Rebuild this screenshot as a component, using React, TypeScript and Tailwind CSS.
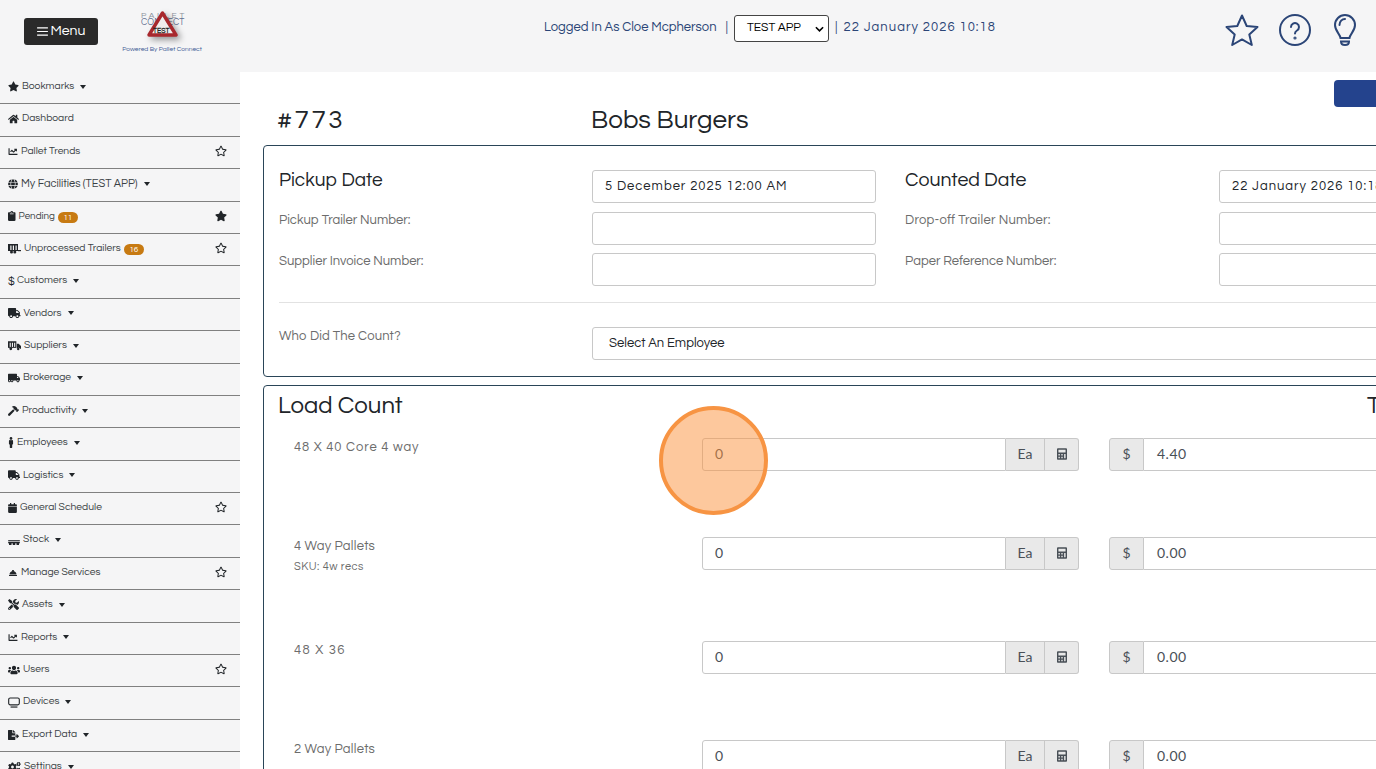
import { ReactNode } from "react";
import {
  FaStar,
  FaRegStar,
  FaHome,
  FaChartLine,
  FaGlobe,
  FaClipboard,
  FaTruck,
  FaTruckMoving,
  FaHammer,
  FaMale,
  FaCalendar,
  FaConciergeBell,
  FaTools,
  FaUsers,
  FaFileExport,
  FaCogs,
  FaCalculator,
} from "react-icons/fa";

const sans = "font-['Questrial','Lato','Liberation_Sans',sans-serif]";

type NavItem = {
  label: string;
  icon: ReactNode;
  caret?: boolean;
  star?: "empty" | "full";
  badge?: string;
  labelClass?: string;
};

// hand drawn ones, the icon packs have nothing close enough
const TrailerIcon = () => (
  <svg viewBox="0 0 13 10" className="w-[13px] h-[10px] shrink-0" fill="currentColor">
    <path d="M0 0h10v6H8.700V1.500H7.500V6H6V1.500H4.800V6H3.500V1.500H2.300V6H0z" />
    <circle cx="3.500" cy="8" r="1.500" />
    <circle cx="6.800" cy="8" r="1.500" />
    <rect x="0" y="6" width="10" height="1" />
    <rect x="10" y="6" width="3" height="1.200" />
  </svg>
);

const SupplierIcon = () => (
  <svg viewBox="0 0 14 10" className="w-[13px] h-[10px] shrink-0" fill="currentColor">
    <path d="M0 0h9v6H7.800V1.500H6.600V6H5.400V1.500H4.200V6H3V1.500H1.800V6H0z" />
    <rect x="0" y="6" width="9" height="1" />
    <circle cx="3" cy="8" r="1.500" />
    <path d="M9.500 2.500h2l2.500 2.500v3h-1a2 2 0 0 0-3.500 0z" />
    <circle cx="11" cy="8.200" r="1.300" />
  </svg>
);

const PalletIcon = () => (
  <svg viewBox="0 0 14 6" className="w-[12px] h-[5px] mt-[5px] shrink-0" fill="currentColor">
    <rect x="0" y="0" width="14" height="1" />
    <rect x="0" y="2" width="14" height="2" />
    <rect x="1" y="3" width="3" height="3" />
    <rect x="5.500" y="3" width="3" height="3" />
    <rect x="10" y="3" width="3" height="3" />
  </svg>
);

const MonitorIcon = () => (
  <svg viewBox="0 0 14 12" className="w-[12px] h-[11px] shrink-0" fill="none" stroke="currentColor" strokeWidth="1.300">
    <rect x="0.800" y="0.800" width="12.400" height="8" rx="1.800" />
    <path d="M3 11.300h8" strokeWidth="1.400" />
  </svg>
);

const navItems: NavItem[] = [
  { label: "Bookmarks", icon: <FaStar className="w-[11px] h-[11px] shrink-0" />, caret: true },
  { label: "Dashboard", icon: <FaHome className="w-[11px] h-[10px] shrink-0" /> },
  { label: "Pallet Trends", icon: <FaChartLine className="w-[10px] h-[9px] shrink-0" />, star: "empty" },
  { label: "My Facilities (TEST APP)", icon: <FaGlobe className="w-[10px] h-[10px] shrink-0" />, caret: true, labelClass: "text-[11px]" },
  { label: "Pending", icon: <FaClipboard className="w-[7.500px] h-[10px] shrink-0" />, star: "full", badge: "11", labelClass: "text-[9.800px]" },
  { label: "Unprocessed Trailers", icon: <TrailerIcon />, star: "empty", badge: "16" },
  { label: "Customers", icon: <span className="block w-[6px] text-[11px] leading-none">$</span>, caret: true },
  { label: "Vendors", icon: <FaTruck className="w-[12.500px] h-[10px] shrink-0" />, caret: true },
  { label: "Suppliers", icon: <SupplierIcon />, caret: true },
  { label: "Brokerage", icon: <FaTruckMoving className="w-[12px] h-[10px] shrink-0" />, caret: true },
  { label: "Productivity", icon: <FaHammer className="w-[11px] h-[10px] shrink-0" />, caret: true },
  { label: "Employees", icon: <FaMale className="w-[6px] h-[11px] shrink-0" />, caret: true },
  { label: "Logistics", icon: <FaTruck className="w-[12px] h-[10px] shrink-0" />, caret: true },
  { label: "General Schedule", icon: <FaCalendar className="w-[9px] h-[10px] shrink-0" />, star: "empty" },
  { label: "Stock", icon: <PalletIcon />, caret: true },
  { label: "Manage Services", icon: <FaConciergeBell className="w-[10px] h-[8px] shrink-0" />, star: "empty" },
  { label: "Assets", icon: <FaTools className="w-[11px] h-[11px] shrink-0" />, caret: true },
  { label: "Reports", icon: <FaChartLine className="w-[10px] h-[9px] shrink-0" />, caret: true },
  { label: "Users", icon: <FaUsers className="w-[12px] h-[10px] shrink-0" />, star: "empty" },
  { label: "Devices", icon: <MonitorIcon />, caret: true },
  { label: "Export Data", icon: <FaFileExport className="w-[11px] h-[10px] shrink-0" />, caret: true },
  { label: "Settings", icon: <FaCogs className="w-[13px] h-[10px] shrink-0" />, caret: true },
];

const Caret = () => (
  <span className="ml-[6px] inline-block w-0 h-0 border-x-[3.5px] border-x-transparent border-t-[4px] border-t-[#212529]" />
);

const SideItem = ({ item }: { item: NavItem }) => (
  <div className="h-[32.4px] shrink-0 border-b border-b-[#808080] flex items-center pl-[8px] pr-[13px] pb-[2px]">
    <span className="flex items-center gap-[3px] text-[#212529]">
      {item.icon}
      <span className={`text-[#3a3f44] whitespace-nowrap ${item.labelClass ?? "text-[10.3px]"}`}>{item.label}</span>
      {item.badge && (
        <span className="mt-[2px] h-[11px] w-[20px] rounded-full bg-[#c77a12] text-white text-[8px] leading-[11px] text-center">
          {item.badge}
        </span>
      )}
    </span>
    {item.caret && <Caret />}
    {item.star === "empty" && <FaRegStar className="ml-auto -mt-[1px] w-[12px] h-[12px] text-[#212529]" />}
    {item.star === "full" && <FaStar className="ml-auto -mt-[1px] w-[12px] h-[12px] text-[#212529]" />}
  </div>
);

const TextInput = ({ value = "" }: { value?: string }) => (
  <div className="w-[284px] h-[33px] shrink-0 border border-[#c8c8c8] rounded-[3px] bg-white flex items-center pl-[12px] text-[13px] tracking-[1px] text-[#212529] whitespace-nowrap overflow-hidden">
    {value}
  </div>
);

const Row = ({ l1, v1, l2, v2, big, l2Class }: { l1: string; v1?: string; l2: string; v2?: string; big?: boolean; l2Class?: string }) => (
  <div className="flex items-start mb-[8.5px]">
    <div className={`w-[313px] shrink-0 ${big ? "text-[19px] text-[#212529] leading-[20px]" : "text-[13px] text-[#6c6c6c] -mt-[1px]"}`}>{l1}</div>
    <TextInput value={v1} />
    <div className={`w-[314px] ml-[29px] shrink-0 ${big ? "text-[19.500px] text-[#212529] leading-[20px]" : "text-[13px] text-[#6c6c6c] -mt-[1px]"} ${l2Class ?? ""}`}>{l2}</div>
    <TextInput value={v2} />
  </div>
);

const CountRow = ({ name, sku, price, height, nameClass }: { name: string; sku?: string; price: string; height: string; nameClass: string }) => (
  <div className={`flex items-start ${height}`}>
    <div className="w-[424px] shrink-0 pl-[16px] pt-[1px]">
      <div className={`text-[13px] text-[#6c6c6c] leading-[17px] ${nameClass}`}>{name}</div>
      {sku && <div className="text-[11px] text-[#6c6c6c] mt-[4px] tracking-[0.5px]">{sku}</div>}
    </div>
    <div className="w-[377px] h-[33px] shrink-0 flex font-['Lato',sans-serif]">
      <div className="flex-1 bg-white border border-[#c8c8c8] rounded-l-[3px] flex items-center pl-[12px] pb-[2px] text-[14px] text-[#495057]">0</div>
      <div className="w-[39px] shrink-0 flex items-center justify-center pb-[2px] bg-[#e9e9e9] border-y border-r border-[#c8c8c8] text-[14px] text-[#495057]">Ea</div>
      <div className="w-[34px] shrink-0 flex items-center justify-center pb-[2px] bg-[#e9e9e9] border-y border-r border-[#c8c8c8] rounded-r-[3px] text-[#495057]">
        <FaCalculator className="w-[10px] h-[12px]" />
      </div>
    </div>
    <div className="ml-[30px] flex h-[33px] w-[400px] shrink-0 font-['Lato',sans-serif]">
      <div className="w-[35px] shrink-0 flex items-center justify-center pb-[2px] bg-[#e9e9e9] border border-[#c8c8c8] rounded-l-[3px] text-[14px] text-[#495057]">$</div>
      <div className="flex-1 bg-white border-y border-[#c8c8c8] flex items-center pl-[13px] pb-[2px] text-[14px] tracking-[0.5px] text-[#495057]">{price}</div>
    </div>
  </div>
);

export default function App() {
  return (
    <div className={`relative w-[1376px] h-[769px] overflow-hidden bg-white flex flex-col ${sans}`}>
      {/* top bar */}
      <header className="h-[72px] shrink-0 bg-[#f5f5f6] flex items-start">
        <div className="w-[240px] shrink-0 flex items-start">
          <button className="ml-[24px] mt-[18px] w-[74px] h-[27px] bg-[#2a2a2a] rounded-[3px] text-white text-[14px] flex items-center justify-center gap-[3px]">
            <svg viewBox="0 0 12 10" className="w-[11px] h-[9px]" fill="none" stroke="white" strokeWidth="1.200">
              <path d="M0 1h12M0 5h12M0 9h12" />
            </svg>
            Menu
          </button>
          <div className="ml-[24px] mt-[10px] w-[80px] flex flex-col items-center">
            <div className="relative w-[60px] h-[33px]">
              <div className="absolute left-[9px] top-[1.500px] text-[#8a8f99] text-[8.500px] tracking-[2.700px] leading-[8px] whitespace-nowrap">PALLET</div>
              <div className="absolute left-[9px] top-[8.500px] text-[#5f6f8f] text-[9px] tracking-[0.100px] leading-[8px] whitespace-nowrap">CONNECT</div>
              <svg viewBox="0 0 34 28" className="absolute left-[14px] top-0 w-[34px] h-[28px] drop-shadow-[3px_3px_3px_rgba(0,0,0,0.4)]">
                <path d="M16.500 3 L30 25 H3 Z" fill="#f0eded" stroke="#a8282d" strokeWidth="3.400" strokeLinejoin="round" />
              </svg>
              <div className="absolute left-[21px] top-[17px] text-[#222] text-[7px] font-bold leading-[8px]">TEST</div>
            </div>
            <div className="mt-[2px] text-[6.600px] text-[#3c5a94] whitespace-nowrap">Powered By Pallet Connect</div>
          </div>
        </div>
        <div className="flex items-center h-[30px] mt-[13px] ml-[304px] text-[13px] text-[#2b4577] whitespace-nowrap">
          Logged In As Cloe Mcpherson
          <span className="ml-[9px]">|</span>
          <div className="ml-[6px] w-[95px] h-[27px] mt-[1px] pb-[2px] border border-[#444] rounded-[3px] bg-white text-black text-[12px] flex items-center pl-[12px] relative">
            TEST APP
            <svg viewBox="0 0 10 6" className="absolute right-[4px] top-[10px] w-[9px] h-[6px]" fill="none" stroke="black" strokeWidth="1.800">
              <path d="M1 1l4 4 4-4" />
            </svg>
          </div>
          <span className="ml-[6px]">|</span>
          <span className="ml-[6px] tracking-[1.050px]">22 January 2026 10:18</span>
        </div>
        <div className="ml-auto flex items-start text-[#2b4577] mt-[13px] mr-[18px]">
          <svg viewBox="0 0 36 34" className="w-[36px] h-[34px]" fill="none" stroke="#2b4577" strokeWidth="2" strokeLinejoin="round">
            <path d="M18 2.500 L22.700 13 L33.500 14 L25.300 21.400 L27.800 32 L18 26.400 L8.200 32 L10.700 21.400 L2.500 14 L13.300 13 Z" />
          </svg>
          <svg viewBox="0 0 34 34" className="ml-[18px] w-[34px] h-[34px]" fill="none" stroke="#2b4577" strokeWidth="2" strokeLinecap="round">
            <circle cx="17" cy="17" r="15" />
            <path d="M13 14 a4 4 0 1 1 6 3.500 c-1.300 .8 -2 1.500 -2 3" />
            <circle cx="17" cy="25" r="0.600" />
          </svg>
          <svg viewBox="0 0 26 34" className="ml-[20px] w-[26px] h-[34px]" fill="none" stroke="#2b4577" strokeWidth="2" strokeLinecap="round">
            <path d="M8.500 25 c-.5-4-5.500-7-5.500-13 a10 10 0 0 1 20 0 c0 6-5 9-5.500 13 Z" />
            <path d="M7.500 12 c0-3.500 2.500-6 5.500-6" />
            <path d="M9 28.500h8 c0 2-1.500 3.500-4 3.500 s-4-1.500-4-3.500 Z" />
          </svg>
        </div>
      </header>

      <div className="flex flex-1 min-h-0">
        {/* sidebar */}
        <aside className="w-[240px] shrink-0 bg-[#f5f5f6] flex flex-col overflow-hidden">
          {navItems.map((item) => (
            <SideItem key={item.label} item={item} />
          ))}
        </aside>

        {/* main */}
        <main className="flex-1 min-w-0 overflow-hidden">
          <div className="flex justify-end pt-[8px]">
            <div className="w-[42px] h-[27px] bg-[#24438d] rounded-l-[4px]" />
          </div>
          <div className="flex items-center pl-[37px] h-[30px] -mt-[2px] text-[26px] text-[#212529] leading-[30px]">
            <div className="w-[314px] shrink-0 tracking-[2.500px]">#773</div>
            <div className="whitespace-nowrap">Bobs Burgers</div>
          </div>

          <section className="ml-[23px] mt-[10px] w-[1200px] h-[232px] border border-[#2a4558] rounded-[4px] pl-[15px] pr-[14px] pt-[24px]">
            <Row big l1="Pickup Date" v1="5 December 2025 12:00 AM" l2="Counted Date" v2="22 January 2026 10:18 AM" />
            <Row l1="Pickup Trailer Number:" l2="Drop-off Trailer Number:" l2Class="tracking-[0.25px]" />
            <Row l1="Supplier Invoice Number:" l2="Paper Reference Number:" />
            <div className="border-t border-[#e2e2e2] mt-[16px] mb-[24px]" />
            <div className="flex items-start">
              <div className="w-[313px] shrink-0 text-[13px] text-[#6c6c6c] tracking-[0.15px]">Who Did The Count?</div>
              <div className="w-[900px] shrink-0 h-[33px] border border-[#c8c8c8] rounded-[3px] flex items-center pl-[16px] text-[13px] text-[#212529]">
                Select An Employee
              </div>
            </div>
          </section>

          <section className="ml-[23px] mt-[8px] w-[1200px] h-[500px] border border-[#2a4558] rounded-[4px] pl-[14px] pt-[6px]">
            <div className="relative h-[28px] text-[24px] leading-[28px] text-[#212529]">
              Load Count
              <span className="absolute left-[1089px] top-0">Total</span>
            </div>
            <div className="mt-[18px]">
              <CountRow name="48 X 40 Core 4 way" nameClass="tracking-[0.9px]" price="4.40" height="h-[99px]" />
              <CountRow name="4 Way Pallets" nameClass="tracking-[0.25px]" sku="SKU: 4w recs" price="0.00" height="h-[104px]" />
              <CountRow name="48 X 36" nameClass="tracking-[1.4px]" price="0.00" height="h-[99px]" />
              <CountRow name="2 Way Pallets" nameClass="tracking-[0.25px]" price="0.00" height="h-[100px]" />
            </div>
          </section>
        </main>
      </div>

      {/* click highlight */}
      <div className="absolute left-[659px] top-[406px] w-[109px] h-[109px] rounded-full border-[4px] border-[#f79443] bg-[#fb923c]/50" />
    </div>
  );
}
